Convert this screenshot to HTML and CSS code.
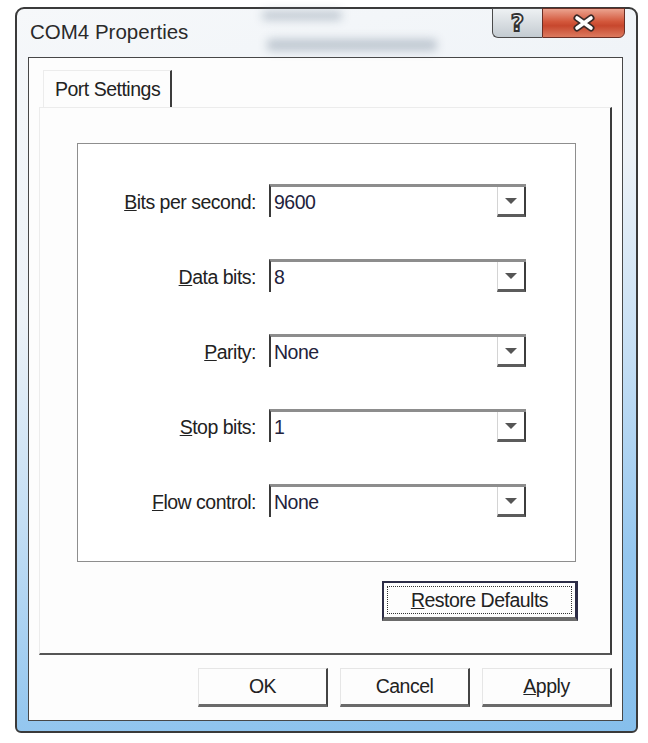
FILE: index.html
```html
<!DOCTYPE html>
<html lang="en">
<head>
    <meta charset="UTF-8">
    <meta name="viewport" content="width=device-width, initial-scale=1.0">
    <title>COM4 Properties</title>
    <link rel="stylesheet" href="styles.css">
</head>
<body>
    <div class="window">
        <!-- Title bar -->
        <div class="titlebar">
            <span class="ghost ghost-a"></span>
            <span class="ghost ghost-b"></span>
            <span class="title">COM4 Properties</span>
            <div class="caption-buttons">
                <button class="cap help"><span>?</span></button>
                <button class="cap close">
                    <svg width="26" height="18" viewBox="0 0 26 18">
                        <path d="M6 4 L20 14 M20 4 L6 14" stroke="#3a2a28" stroke-width="7" stroke-linecap="round"/>
                        <path d="M6 4 L20 14 M20 4 L6 14" stroke="#ffffff" stroke-width="3.6" stroke-linecap="round"/>
                    </svg>
                </button>
            </div>
        </div>

        <!-- Client area -->
        <div class="client">
            <div class="tabs">
                <div class="tab">Port Settings</div>
            </div>

            <div class="page">
                <div class="group">
                    <div class="fields">
                        <label><u>B</u>its per second:</label>
                        <div class="combo"><span class="value">9600</span><span class="drop"><span class="arrow"></span></span></div>

                        <label><u>D</u>ata bits:</label>
                        <div class="combo"><span class="value">8</span><span class="drop"><span class="arrow"></span></span></div>

                        <label><u>P</u>arity:</label>
                        <div class="combo"><span class="value">None</span><span class="drop"><span class="arrow"></span></span></div>

                        <label><u>S</u>top bits:</label>
                        <div class="combo"><span class="value">1</span><span class="drop"><span class="arrow"></span></span></div>

                        <label><u>F</u>low control:</label>
                        <div class="combo"><span class="value">None</span><span class="drop"><span class="arrow"></span></span></div>
                    </div>
                </div>

                <div class="restore-row">
                    <button class="btn restore"><span class="focus"><u>R</u>estore Defaults</span></button>
                </div>
            </div>

            <div class="dialog-buttons">
                <button class="btn">OK</button>
                <button class="btn">Cancel</button>
                <button class="btn"><u>A</u>pply</button>
            </div>
        </div>
    </div>
</body>
</html>
```

FILE: styles.css
```css
body {
    margin: 0;
    padding: 7px 0 0 15px;
    background: #ffffff;
    font-family: "Liberation Sans", Arial, sans-serif;
    font-size: 19.5px;
    letter-spacing: -0.5px;
    color: #222;
}
.window {
    width: 623px;
    height: 726px;
    box-sizing: border-box;
    border: 2px solid #3a3a3a;
    border-radius: 9px 9px 6px 6px;
    background: linear-gradient(165deg, #f6f8fa 0%, #edf2f7 35%, #c4def4 58%, #95c7ef 80%, #86bfec 100%);
    display: flex;
    flex-direction: column;
}
.titlebar {
    position: relative;
    height: 48px;
    display: flex;
    justify-content: space-between;
    align-items: flex-start;
    flex-shrink: 0;
}
.ghost {
    position: absolute;
    background: #7f8fa0;
    filter: blur(5px);
    opacity: 0.45;
    border-radius: 4px;
}
.ghost-a {
    left: 245px;
    top: 2px;
    width: 80px;
    height: 9px;
}
.ghost-b {
    left: 250px;
    top: 30px;
    width: 170px;
    height: 12px;
}
.title {
    position: relative;
    margin: 11px 0 0 13px;
    font-size: 20.5px;
    letter-spacing: 0;
    line-height: 24px;
    color: #2a2a2a;
}
.caption-buttons {
    display: flex;
    margin: -1px 11px 0 0;
}
.cap {
    height: 30px;
    padding: 0;
    border: 1px solid #4a4a4a;
    display: flex;
    align-items: center;
    justify-content: center;
}
.help {
    width: 50px;
    border-radius: 0 0 0 6px;
    border-right: none;
    background: linear-gradient(to bottom, #eef1f3 0%, #d9dee2 50%, #c3cbd1 100%);
}
.help span {
    font-family: "DejaVu Sans", sans-serif;
    font-weight: bold;
    font-size: 23px;
    color: #f4f4f4;
    -webkit-text-stroke: 1.8px #333;
    line-height: 1;
}
.close {
    width: 83px;
    border-radius: 0 0 6px 0;
    border-color: #6a2e24;
    background: linear-gradient(to bottom, #eba38f 0%, #d3573b 45%, #c7472d 60%, #dc7a5f 100%);
}
.client {
    margin: 0 13px 0 11px;
    height: 664px;
    box-sizing: border-box;
    border: 1px solid #474747;
    background: #fdfdfd;
    padding: 12px 10px 0 10px;
}
.tabs {
    display: flex;
    padding-left: 4px;
}
.tab {
    width: 129px;
    height: 37px;
    box-sizing: border-box;
    border-top: 1px solid #ececec;
    border-left: 1px solid #ececec;
    border-right: 2px solid #3c3c3c;
    padding-left: 11px;
    line-height: 36px;
    white-space: nowrap;
}
.page {
    height: 548px;
    box-sizing: border-box;
    border-top: 1px solid #ececec;
    border-left: 1px solid #ececec;
    border-right: 2px solid #3c3c3c;
    border-bottom: 2px solid #555;
    padding: 35px 32px 0 37px;
}
.group {
    width: 499px;
    height: 419px;
    box-sizing: border-box;
    border: 1px solid #8e8e8e;
    background: #ffffff;
}
.fields {
    display: grid;
    grid-template-columns: 178px 257px;
    grid-auto-rows: 33px;
    column-gap: 13px;
    row-gap: 42px;
    padding-top: 40px;
}
.fields label {
    text-align: right;
    line-height: 36px;
    white-space: nowrap;
}
.combo {
    height: 33px;
    box-sizing: border-box;
    display: flex;
    background: #ffffff;
    border-top: 3px solid #8d8d8d;
    border-left: 2px solid #3a3a3a;
}
.combo .value {
    flex: 1;
    padding-left: 3px;
    line-height: 30px;
    color: #22223c;
}
.combo .drop {
    width: 29px;
    box-sizing: border-box;
    border-left: 1px solid #d4d4d4;
    border-right: 2px solid #3d3d3d;
    border-bottom: 3px solid #5c5c5c;
    display: flex;
    align-items: center;
    justify-content: center;
}
.arrow {
    width: 0;
    height: 0;
    border-left: 6px solid transparent;
    border-right: 6px solid transparent;
    border-top: 6px solid #555;
}
.restore-row {
    display: flex;
    justify-content: flex-end;
    margin-top: 19px;
}
.btn {
    font-family: inherit;
    font-size: inherit;
    letter-spacing: inherit;
    color: #222;
    background: #fdfdfd;
    padding: 0;
    box-sizing: border-box;
    border-top: 1px solid #e6e6e6;
    border-left: 1px solid #e6e6e6;
    border-right: 2px solid #444;
    border-bottom: 3px solid #6a6a6a;
}
.restore {
    width: 196px;
    height: 40px;
    padding: 3px;
    border: 2px solid #2c2c46;
    border-right-width: 3px;
    border-bottom: 4px solid #6b6b6b;
    display: flex;
}
.restore .focus {
    flex: 1;
    border: 1px dotted #333;
    line-height: 27px;
}
.dialog-buttons {
    display: flex;
    justify-content: flex-end;
    gap: 12px;
    margin-top: 13px;
}
.dialog-buttons .btn {
    width: 130px;
    height: 39px;
}
```
